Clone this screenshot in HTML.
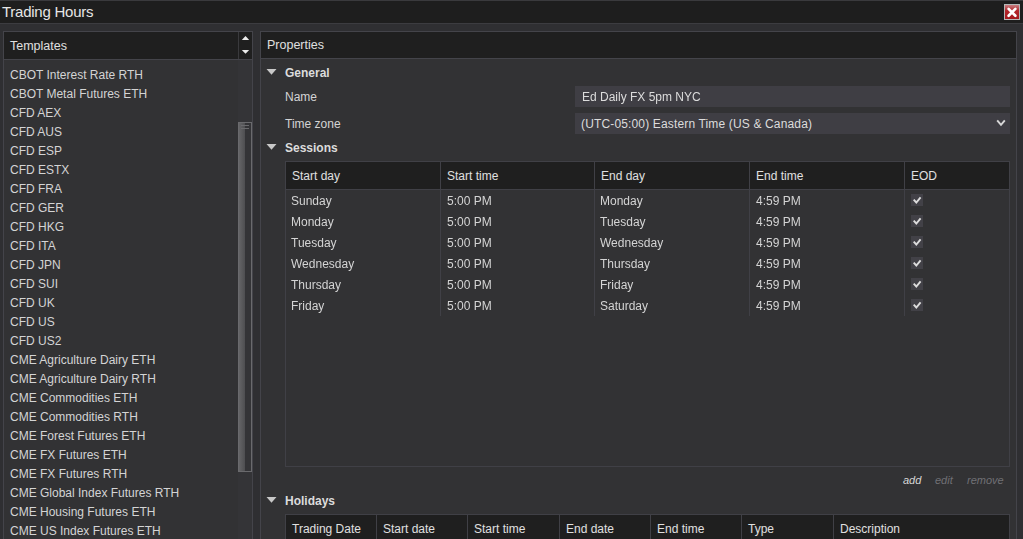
<!DOCTYPE html>
<html><head><meta charset="utf-8">
<style>
*{margin:0;padding:0;box-sizing:border-box}
html,body{width:1023px;height:539px;overflow:hidden;background:#2f2f32;font-family:"Liberation Sans",sans-serif;font-size:12px;color:#d4d4d4}
.a{position:absolute}
#title{left:0;top:0;width:1023px;height:23px;background:#1e1e1e;border-top:1px solid #3a3a3d}
#title span{position:absolute;left:2px;top:2px;font-size:15px;letter-spacing:-0.25px;color:#e6e6e6}
#close{left:1004px;top:4px;width:16px;height:16px;background:linear-gradient(#c77f82,#b3272c 40%,#a5181d);border:1px solid #b4b8b8}
#tline{left:0;top:23px;width:1023px;height:1px;background:#3c3c40}
#lp{left:3px;top:31px;width:250px;height:520px;border:1px solid #44444a;background:#323234}
#lph{left:4px;top:32px;width:248px;height:28px;background:#1f1f1f;border-bottom:1px solid #44444a}
#lph span{position:absolute;left:6px;top:7px;font-size:12.5px;color:#e0e0e0}
#lpdiv{left:238px;top:32px;width:1px;height:27px;background:#3a3a3d}
.row{position:absolute;left:10px;height:19px;line-height:19px;white-space:nowrap;color:#d4d4d4}
#rp{left:260px;top:31px;width:757px;height:520px;border:1px solid #44444a;background:#323234}
#rph{left:261px;top:32px;width:755px;height:27px;background:#1f1f1f;border-bottom:1px solid #44444a}
#rph span{position:absolute;left:6px;top:6px;font-size:12.5px;color:#e0e0e0}
.tri{position:absolute;width:0;height:0;border-left:5px solid transparent;border-right:5px solid transparent;border-top:6px solid #c8c8c8}
.sec{position:absolute;left:285px;font-weight:bold;color:#dcdcdc;line-height:16px}
.lbl{position:absolute;left:285px;line-height:16px;color:#d4d4d4}
.box{position:absolute;left:575px;width:435px;height:21px;background:#3f3e44;line-height:23px;padding-left:7px;color:#dcdcdc}
table{border-collapse:collapse;position:absolute}
.grid{position:absolute;border:1px solid #404046;background:#323234}
.gh{position:absolute;background:#1f1f1f;border-bottom:1px solid #404046}
.gh div{position:absolute;top:0;height:27px;line-height:29px;padding-left:6px;border-left:1px solid #404046;color:#e0e0e0}
.cell{position:absolute;line-height:23px;color:#d4d4d4;white-space:nowrap;will-change:transform}
.vl{position:absolute;width:1px;background:#404046}
.chk{position:absolute;width:12px;height:12px;background:#424147}
.lk{position:absolute;top:473px;font-style:italic;font-size:11px;line-height:14px}
#track{left:238px;top:60px;width:14px;height:480px;background:#343437}
#thumb{left:238px;top:122px;width:14px;height:350px;border:1px solid #6a6a6d;background:#343437}
#thl{position:absolute;left:0;top:0;width:6px;height:100%;background:linear-gradient(90deg,#656567,#4e4e51)}
.grip{position:absolute;left:2px;width:8px;height:1px;background:#6a6a6d}
</style></head><body>
<div id="title" class="a"><span>Trading Hours</span></div>
<div id="close" class="a"><svg width="14" height="14" viewBox="0 0 14 14" style="position:absolute;left:0;top:0"><path d="M3.6 3.9 L10.4 10.7 M10.4 3.9 L3.6 10.7" stroke="#ffffff" stroke-width="2.7" stroke-linecap="round"/></svg></div>
<div id="tline" class="a"></div>


<div id="lp" class="a"></div>
<div id="lph" class="a"><span>Templates</span></div>
<div id="lpdiv" class="a"></div>
<div id="track" class="a"></div>
<div id="thumb" class="a"><div id="thl"></div><div class="grip" style="top:2px"></div><div class="grip" style="top:5px"></div></div>
<svg class="a" style="left:241px;top:35px" width="9" height="20" viewBox="0 0 9 20"><path d="M0.8 5 L4.5 1 L8.2 5Z" fill="#ececec"/><path d="M0.8 15 L4.5 18.8 L8.2 15Z" fill="#ececec"/></svg>
<div class="row" style="top:66px">CBOT Interest Rate RTH</div>
<div class="row" style="top:85px">CBOT Metal Futures ETH</div>
<div class="row" style="top:104px">CFD AEX</div>
<div class="row" style="top:123px">CFD AUS</div>
<div class="row" style="top:142px">CFD ESP</div>
<div class="row" style="top:161px">CFD ESTX</div>
<div class="row" style="top:180px">CFD FRA</div>
<div class="row" style="top:199px">CFD GER</div>
<div class="row" style="top:218px">CFD HKG</div>
<div class="row" style="top:237px">CFD ITA</div>
<div class="row" style="top:256px">CFD JPN</div>
<div class="row" style="top:275px">CFD SUI</div>
<div class="row" style="top:294px">CFD UK</div>
<div class="row" style="top:313px">CFD US</div>
<div class="row" style="top:332px">CFD US2</div>
<div class="row" style="top:351px">CME Agriculture Dairy ETH</div>
<div class="row" style="top:370px">CME Agriculture Dairy RTH</div>
<div class="row" style="top:389px">CME Commodities ETH</div>
<div class="row" style="top:408px">CME Commodities RTH</div>
<div class="row" style="top:427px">CME Forest Futures ETH</div>
<div class="row" style="top:446px">CME FX Futures ETH</div>
<div class="row" style="top:465px">CME FX Futures RTH</div>
<div class="row" style="top:484px">CME Global Index Futures RTH</div>
<div class="row" style="top:503px">CME Housing Futures ETH</div>
<div class="row" style="top:522px">CME US Index Futures ETH</div>

<div id="rp" class="a"></div>
<div id="rph" class="a"><span>Properties</span></div>
<svg class="a" style="left:266px;top:69px" width="11" height="7"><path d="M0.5 0 L10.5 0 L5.5 5.8Z" fill="#c8c8c8"/></svg>
<div class="sec" style="top:65px">General</div>
<div class="lbl" style="top:89px">Name</div>
<div class="box" style="top:86px"><span style="display:inline-block;will-change:transform">Ed Daily FX 5pm NYC</span></div>
<div class="lbl" style="top:116px">Time zone</div>
<div class="box" style="top:113px;padding-left:6px;letter-spacing:0.15px">(UTC-05:00) Eastern Time (US &amp; Canada)</div>
<svg class="a" style="left:995px;top:118px" width="12" height="10" viewBox="0 0 12 10"><path d="M2.2 2.3 L6 6.8 L9.8 2.3" fill="none" stroke="#d8d8d8" stroke-width="1.9"/></svg>
<svg class="a" style="left:266px;top:144px" width="11" height="7"><path d="M0.5 0 L10.5 0 L5.5 5.8Z" fill="#c8c8c8"/></svg>
<div class="sec" style="top:140px">Sessions</div>

<div class="grid" style="left:285px;top:161px;width:725px;height:306px"></div>
<div class="gh" style="left:286px;top:162px;width:723px;height:28px">
 <div style="left:-1px;width:155px;border-left:none;padding-left:7px">Start day</div>
 <div style="left:154px;width:155px">Start time</div>
 <div style="left:308px;width:155px">End day</div>
 <div style="left:463px;width:155px">End time</div>
 <div style="left:618px;width:105px">EOD</div>
</div>
<div class="vl" style="left:440px;top:189px;height:127px"></div>
<div class="vl" style="left:594px;top:189px;height:127px"></div>
<div class="vl" style="left:749px;top:189px;height:127px"></div>
<div class="vl" style="left:904px;top:189px;height:127px"></div>
<div class="cell" style="left:291px;top:190px">Sunday</div>
<div class="cell" style="left:447px;top:190px">5:00 PM</div>
<div class="cell" style="left:600px;top:190px">Monday</div>
<div class="cell" style="left:756px;top:190px">4:59 PM</div>
<div class="chk" style="left:911px;top:194px"><svg width="12" height="12" viewBox="0 0 12 12"><path d="M2.7 5.7 L5.3 8.5 L9.6 3.3" fill="none" stroke="#dcdcdc" stroke-width="1.9"/></svg></div>
<div class="cell" style="left:291px;top:211px">Monday</div>
<div class="cell" style="left:447px;top:211px">5:00 PM</div>
<div class="cell" style="left:600px;top:211px">Tuesday</div>
<div class="cell" style="left:756px;top:211px">4:59 PM</div>
<div class="chk" style="left:911px;top:215px"><svg width="12" height="12" viewBox="0 0 12 12"><path d="M2.7 5.7 L5.3 8.5 L9.6 3.3" fill="none" stroke="#dcdcdc" stroke-width="1.9"/></svg></div>
<div class="cell" style="left:291px;top:232px">Tuesday</div>
<div class="cell" style="left:447px;top:232px">5:00 PM</div>
<div class="cell" style="left:600px;top:232px">Wednesday</div>
<div class="cell" style="left:756px;top:232px">4:59 PM</div>
<div class="chk" style="left:911px;top:236px"><svg width="12" height="12" viewBox="0 0 12 12"><path d="M2.7 5.7 L5.3 8.5 L9.6 3.3" fill="none" stroke="#dcdcdc" stroke-width="1.9"/></svg></div>
<div class="cell" style="left:291px;top:253px">Wednesday</div>
<div class="cell" style="left:447px;top:253px">5:00 PM</div>
<div class="cell" style="left:600px;top:253px">Thursday</div>
<div class="cell" style="left:756px;top:253px">4:59 PM</div>
<div class="chk" style="left:911px;top:257px"><svg width="12" height="12" viewBox="0 0 12 12"><path d="M2.7 5.7 L5.3 8.5 L9.6 3.3" fill="none" stroke="#dcdcdc" stroke-width="1.9"/></svg></div>
<div class="cell" style="left:291px;top:274px">Thursday</div>
<div class="cell" style="left:447px;top:274px">5:00 PM</div>
<div class="cell" style="left:600px;top:274px">Friday</div>
<div class="cell" style="left:756px;top:274px">4:59 PM</div>
<div class="chk" style="left:911px;top:278px"><svg width="12" height="12" viewBox="0 0 12 12"><path d="M2.7 5.7 L5.3 8.5 L9.6 3.3" fill="none" stroke="#dcdcdc" stroke-width="1.9"/></svg></div>
<div class="cell" style="left:291px;top:295px">Friday</div>
<div class="cell" style="left:447px;top:295px">5:00 PM</div>
<div class="cell" style="left:600px;top:295px">Saturday</div>
<div class="cell" style="left:756px;top:295px">4:59 PM</div>
<div class="chk" style="left:911px;top:299px"><svg width="12" height="12" viewBox="0 0 12 12"><path d="M2.7 5.7 L5.3 8.5 L9.6 3.3" fill="none" stroke="#dcdcdc" stroke-width="1.9"/></svg></div>
<div class="lk" style="left:903px;color:#d8d8d8">add</div>
<div class="lk" style="left:935px;color:#707074">edit</div>
<div class="lk" style="left:967px;color:#707074">remove</div>

<svg class="a" style="left:266px;top:497px" width="11" height="7"><path d="M0.5 0 L10.5 0 L5.5 5.8Z" fill="#c8c8c8"/></svg>
<div class="sec" style="top:493px">Holidays</div>
<div class="grid" style="left:285px;top:514px;width:725px;height:40px"></div>
<div class="gh" style="left:286px;top:515px;width:723px;height:28px">
 <div style="left:-1px;width:91px;border-left:none;padding-left:7px">Trading Date</div>
 <div style="left:90px;width:91px">Start date</div>
 <div style="left:181px;width:92px">Start time</div>
 <div style="left:273px;width:91px">End date</div>
 <div style="left:364px;width:92px">End time</div>
 <div style="left:455px;width:92px">Type</div>
 <div style="left:547px;width:176px">Description</div>
</div>
</body></html>
